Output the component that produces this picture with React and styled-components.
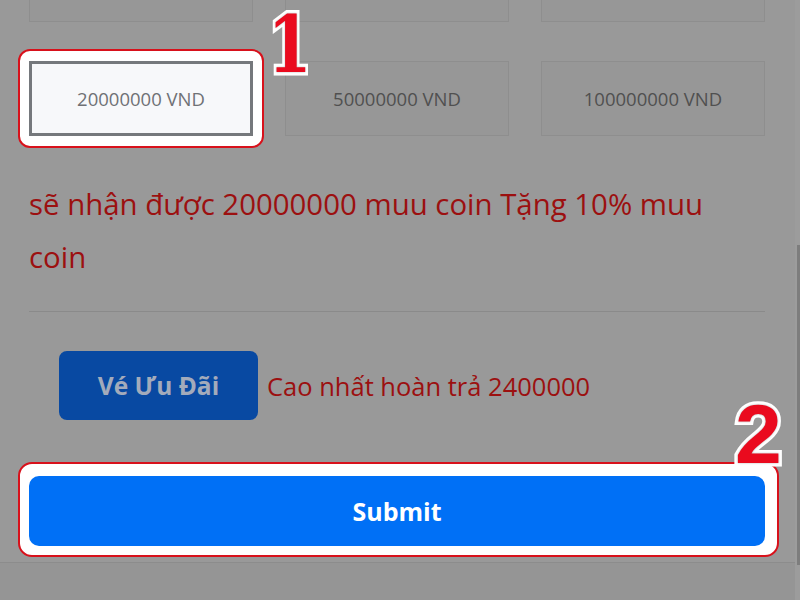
import React from 'react';
import styled, { createGlobalStyle } from 'styled-components';

const GlobalStyle = createGlobalStyle`
	html, body {
		margin: 0;
		padding: 0;
		background: #999999;
	}
	body {
		font-family: 'Open Sans', 'Noto Sans', sans-serif;
	}
`;

const Page = styled.div`
	position: relative;
	width: 800px;
	height: 600px;
	overflow: hidden;
	background: #999999;
`;

const Scrollbar = styled.div`
	position: absolute;
	top: 0;
	right: 0;
	width: 5px;
	height: 600px;
	background: #9c9c9c;
	&::after {
		content: '';
		position: absolute;
		top: 245px;
		right: 0;
		width: 3px;
		height: 320px;
		background: #7d7d7d;
	}
`;

const Body = styled.div`
	width: 736px;
	padding-left: 29px;
`;

const AmountGrid = styled.div`
	display: grid;
	grid-template-columns: repeat(3, 1fr);
	grid-auto-rows: 75px;
	column-gap: 32px;
	row-gap: 39px;
	margin-top: -53px;
`;

const AmountCard = styled.div`
	box-sizing: border-box;
	display: flex;
	align-items: center;
	justify-content: center;
	height: 75px;
	font-size: 18.5px;
	border: ${(p) => (p.$active ? '3px solid #75787c' : '1px solid #8e8e8e')};
	background: ${(p) => (p.$active ? '#f7f8fa' : '#979797')};
	color: ${(p) => (p.$active ? '#6f7175' : '#505050')};
`;

const Highlight = styled.div`
	box-sizing: border-box;
	background: #ffffff;
	border: 2px solid #d8111b;
	border-radius: ${(p) => p.$radius || 12}px;
	padding: ${(p) => p.$pad};
	margin: ${(p) => p.$margin};
`;

const Message = styled.p`
	margin: 42px 0 0;
	font-size: 29.4px;
	line-height: 53px;
	color: #9c1010;
`;

const Divider = styled.hr`
	margin: 27px 0 0;
	border: 0;
	border-top: 1px solid #8a8a8a;
`;

const PromoRow = styled.div`
	display: flex;
	align-items: center;
	gap: 9px;
	margin-top: 39px;
	padding-left: 30px;
`;

const PromoButton = styled.button`
	width: 199px;
	height: 69px;
	border: 0;
	border-radius: 8px;
	background: #0849a2;
	color: #a3abbb;
	font-family: inherit;
	font-size: 24.5px;
	font-weight: 700;
`;

const PromoText = styled.span`
	font-size: 25.5px;
	color: #9c1010;
`;

const SubmitButton = styled.button`
	display: block;
	width: 736px;
	height: 70px;
	border: 0;
	border-radius: 10px;
	background: #0070f6;
	color: #ffffff;
	font-family: inherit;
	font-size: 25px;
	font-weight: 700;
`;

const Footer = styled.div`
	margin-top: 5px;
	height: 40px;
	border-top: 1px solid #8c8c8c;
	background: #959595;
`;

const Marker = styled.span`
	position: absolute;
	left: ${(p) => p.$x}px;
	top: ${(p) => p.$y}px;
	font-family: ${(p) => p.$font};
	font-size: ${(p) => p.$size}px;
	font-weight: 900;
	line-height: 1;
	color: #ea0a1e;
	-webkit-text-stroke: 7px #ffffff;
	paint-order: stroke fill;
	text-shadow: 0 0 2px rgba(0, 0, 0, 0.35);
	transform: scaleX(${(p) => p.$sx || 1});
	transform-origin: left top;
`;

const amounts = [
	{ label: '' },
	{ label: '' },
	{ label: '' },
	{ label: '20000000 VND', active: true },
	{ label: '50000000 VND' },
	{ label: '100000000 VND' },
];

function App() {
	return (
		<Page>
			<GlobalStyle />
			<Body>
				<AmountGrid>
					{amounts.map((a, i) =>
						a.active ? (
							<Highlight key={i} $pad='10px 9px' $margin='-12px -11px'>
								<AmountCard $active>{a.label}</AmountCard>
							</Highlight>
						) : (
							<AmountCard key={i}>{a.label}</AmountCard>
						)
					)}
				</AmountGrid>

				<Message>sẽ nhận được 20000000 muu coin Tặng 10% muu coin</Message>

				<Divider />

				<PromoRow>
					<PromoButton>Vé Ưu Đãi</PromoButton>
					<PromoText>Cao nhất hoàn trả 2400000</PromoText>
				</PromoRow>

				<Highlight
					$radius={14}
					$pad='12px 12px 9px 9px'
					$margin='42px -14px 0 -11px'>
					<SubmitButton>Submit</SubmitButton>
				</Highlight>
			</Body>
			<Footer />
			<Scrollbar />

			<Marker $x={268} $y={6} $size={78} $font="'DejaVu Serif', serif" $sx={0.8}>
				1
			</Marker>
			<Marker $x={735} $y={392} $size={84} $font="'Liberation Sans', sans-serif">
				2
			</Marker>
		</Page>
	);
}

export default App;
